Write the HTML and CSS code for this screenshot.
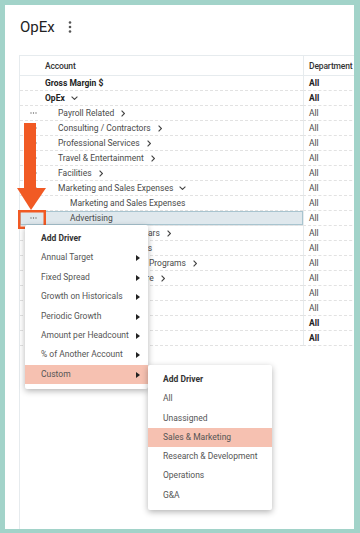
FILE: index.html
```html
<!DOCTYPE html>
<html lang="en">
<head>
  <meta charset="UTF-8" />
  <title>OpEx</title>
  <link rel="stylesheet" href="styles.css">
</head>
<body>
  <div class="panel">
    <div class="title-bar">
      <h1>OpEx</h1>
      <svg class="kebab" width="4" height="12" viewBox="0 0 4 12">
        <circle cx="2" cy="1.5" r="1.3" />
        <circle cx="2" cy="6" r="1.3" />
        <circle cx="2" cy="10.5" r="1.3" />
      </svg>
    </div>

    <div class="grid">
      <div class="row head">
        <div class="acct"><span class="name">Account</span></div>
        <div class="dept">Department</div>
      </div>

      <div class="row strong">
        <div class="acct"><span class="name">Gross Margin $</span></div>
        <div class="dept">All</div>
      </div>
      <div class="row strong">
        <div class="acct"><span class="name">OpEx</span><svg class="chev-down" width="7" height="4" viewBox="0 0 7 4"><path d="M0.6 0.6 L3.5 3.4 L6.4 0.6" /></svg></div>
        <div class="dept">All</div>
      </div>
      <div class="row">
        <div class="acct"><svg class="dots" width="7" height="2" viewBox="0 0 7 2"><circle cx="1" cy="1" r="0.65" /><circle cx="3.5" cy="1" r="0.65" /><circle cx="6" cy="1" r="0.65" /></svg><span class="name lvl1">Payroll Related</span><svg class="chev" width="4" height="7" viewBox="0 0 4 7"><path d="M0.6 0.6 L3.4 3.5 L0.6 6.4" /></svg></div>
        <div class="dept">All</div>
      </div>
      <div class="row">
        <div class="acct"><svg class="dots" width="7" height="2" viewBox="0 0 7 2"><circle cx="1" cy="1" r="0.65" /><circle cx="3.5" cy="1" r="0.65" /><circle cx="6" cy="1" r="0.65" /></svg><span class="name lvl1">Consulting / Contractors</span><svg class="chev" width="4" height="7" viewBox="0 0 4 7"><path d="M0.6 0.6 L3.4 3.5 L0.6 6.4" /></svg></div>
        <div class="dept">All</div>
      </div>
      <div class="row">
        <div class="acct"><svg class="dots" width="7" height="2" viewBox="0 0 7 2"><circle cx="1" cy="1" r="0.65" /><circle cx="3.5" cy="1" r="0.65" /><circle cx="6" cy="1" r="0.65" /></svg><span class="name lvl1">Professional Services</span><svg class="chev" width="4" height="7" viewBox="0 0 4 7"><path d="M0.6 0.6 L3.4 3.5 L0.6 6.4" /></svg></div>
        <div class="dept">All</div>
      </div>
      <div class="row">
        <div class="acct"><svg class="dots" width="7" height="2" viewBox="0 0 7 2"><circle cx="1" cy="1" r="0.65" /><circle cx="3.5" cy="1" r="0.65" /><circle cx="6" cy="1" r="0.65" /></svg><span class="name lvl1">Travel &amp; Entertainment</span><svg class="chev" width="4" height="7" viewBox="0 0 4 7"><path d="M0.6 0.6 L3.4 3.5 L0.6 6.4" /></svg></div>
        <div class="dept">All</div>
      </div>
      <div class="row">
        <div class="acct"><svg class="dots" width="7" height="2" viewBox="0 0 7 2"><circle cx="1" cy="1" r="0.65" /><circle cx="3.5" cy="1" r="0.65" /><circle cx="6" cy="1" r="0.65" /></svg><span class="name lvl1">Facilities</span><svg class="chev" width="4" height="7" viewBox="0 0 4 7"><path d="M0.6 0.6 L3.4 3.5 L0.6 6.4" /></svg></div>
        <div class="dept">All</div>
      </div>
      <div class="row">
        <div class="acct"><svg class="dots" width="7" height="2" viewBox="0 0 7 2"><circle cx="1" cy="1" r="0.65" /><circle cx="3.5" cy="1" r="0.65" /><circle cx="6" cy="1" r="0.65" /></svg><span class="name lvl1">Marketing and Sales Expenses</span><svg class="chev-down" width="7" height="4" viewBox="0 0 7 4"><path d="M0.6 0.6 L3.5 3.4 L6.4 0.6" /></svg></div>
        <div class="dept">All</div>
      </div>
      <div class="row">
        <div class="acct"><span class="name lvl2">Marketing and Sales Expenses</span></div>
        <div class="dept">All</div>
      </div>
      <div class="row selected">
        <div class="acct"><svg class="dots" width="7" height="2" viewBox="0 0 7 2"><circle cx="1" cy="1" r="0.65" /><circle cx="3.5" cy="1" r="0.65" /><circle cx="6" cy="1" r="0.65" /></svg><span class="name lvl2">Advertising</span></div>
        <div class="dept">All</div>
      </div>
      <div class="row">
        <div class="acct"><span class="name lvl1">Conferences and Seminars</span><svg class="chev" width="4" height="7" viewBox="0 0 4 7"><path d="M0.6 0.6 L3.4 3.5 L0.6 6.4" /></svg></div>
        <div class="dept">All</div>
      </div>
      <div class="row">
        <div class="acct"><span class="name lvl1">Marketing Print Products</span></div>
        <div class="dept">All</div>
      </div>
      <div class="row">
        <div class="acct"><span class="name lvl1">Demand Gen Marketing Programs</span><svg class="chev" width="4" height="7" viewBox="0 0 4 7"><path d="M0.6 0.6 L3.4 3.5 L0.6 6.4" /></svg></div>
        <div class="dept">All</div>
      </div>
      <div class="row">
        <div class="acct"><span class="name lvl1">Sales Tools and Software</span><svg class="chev" width="4" height="7" viewBox="0 0 4 7"><path d="M0.6 0.6 L3.4 3.5 L0.6 6.4" /></svg></div>
        <div class="dept">All</div>
      </div>
      <div class="row">
        <div class="acct"><span class="name lvl1">Insurance</span></div>
        <div class="dept">All</div>
      </div>
      <div class="row">
        <div class="acct"><span class="name lvl1">Other</span></div>
        <div class="dept">All</div>
      </div>
      <div class="row strong">
        <div class="acct"><span class="name">Total OpEx</span></div>
        <div class="dept">All</div>
      </div>
      <div class="row strong">
        <div class="acct"><span class="name">Net Income</span></div>
        <div class="dept">All</div>
      </div>
    </div>

    <!-- Flecha que señala el menú de la fila -->
    <svg class="pointer" width="30" height="111" viewBox="0 0 30 111">
      <rect x="7" y="0" width="12" height="67" />
      <polygon points="0,65 29,65 14,87" />
      <rect class="box" x="2.25" y="88.25" width="25.5" height="16.5" />
    </svg>

    <div class="menu main">
      <div class="item title">Add Driver</div>
      <div class="item">Annual Target<span class="tri"></span></div>
      <div class="item">Fixed Spread<span class="tri"></span></div>
      <div class="item">Growth on Historicals<span class="tri"></span></div>
      <div class="item">Periodic Growth<span class="tri"></span></div>
      <div class="item">Amount per Headcount<span class="tri"></span></div>
      <div class="item">% of Another Account<span class="tri"></span></div>
      <div class="item active">Custom<span class="tri"></span></div>
    </div>

    <div class="menu sub">
      <div class="item title">Add Driver</div>
      <div class="item">All</div>
      <div class="item">Unassigned</div>
      <div class="item active">Sales &amp; Marketing</div>
      <div class="item">Research &amp; Development</div>
      <div class="item">Operations</div>
      <div class="item">G&amp;A</div>
    </div>
  </div>
</body>
</html>
```

FILE: styles.css
```css
html, body {
  margin: 0;
}
body {
  background-color: #a2d3c9;
  padding: 5px 6px 4px 5px;
  height: 533px;
  box-sizing: border-box;
  font-family: Roboto, "Noto Sans", sans-serif;
}
.panel {
  position: relative;
  height: 524px;
  background-color: #fff;
  padding: 12px 0 0 14px;
  box-sizing: border-box;
  overflow: hidden;
  display: flex;
  flex-direction: column;
}

/* Titulo */
.title-bar {
  display: flex;
  align-items: center;
  height: 20px;
  padding-left: 1px;
}
.title-bar h1 {
  margin: 0;
  font-size: 15px;
  font-weight: 400;
  line-height: 20px;
  color: #222;
}
.kebab {
  margin-left: 13px;
  fill: #555;
}

/* Tabla */
.grid {
  flex: 1;
  margin-top: 18px;
  border-left: 1px solid #e6ebee;
  border-top: 1px solid #e6ebee;
  width: 380px;
  font-size: 8.5px;
  color: #4a4a4a;
}
.row {
  display: grid;
  grid-template-columns: 283px 80px;
  height: 15px;
}
.acct, .dept {
  display: flex;
  align-items: center;
  border-bottom: 1px dashed #e2e2e2;
  box-sizing: border-box;
}
.acct {
  padding-left: 25px;
  position: relative;
}
.dept {
  border-left: 1px solid #e6ebee;
  padding-left: 5px;
}
.row.head {
  height: 20px;
}
.row.head .acct, .row.head .dept {
  border-bottom: 1px solid #e6ebee;
  font-weight: 500;
  color: #333;
  letter-spacing: -0.15px;
}
.row.strong .acct, .row.strong .dept {
  font-weight: 700;
  color: #222;
}
.row.selected .acct {
  background-color: #dfe8ed;
  box-shadow: inset 0 0 0 1px #a8c4cf;
}
.dots {
  position: absolute;
  left: 10px;
  top: 6px;
  fill: #666;
}
.name.lvl1 {
  padding-left: 13px;
}
.name.lvl2 {
  padding-left: 25px;
}
.chev {
  margin-left: 7px;
  fill: none;
  stroke: #444;
  stroke-width: 1.1;
}
.chev-down {
  margin-left: 6px;
  fill: none;
  stroke: #444;
  stroke-width: 1.1;
}

/* Flecha */
.pointer {
  position: absolute;
  left: 12px;
  top: 118px;
  fill: #f15a24;
}
.pointer .box {
  fill: none;
  stroke: #f15a24;
  stroke-width: 2.5;
}

/* Menus */
.menu {
  position: absolute;
  background-color: #fff;
  box-shadow: 0 2px 6px rgba(0, 0, 0, 0.3);
  border-radius: 2px;
  font-size: 8.5px;
  color: #555;
}
.menu .item {
  position: relative;
  height: 19.4px;
  line-height: 19.4px;
  white-space: nowrap;
}
.menu .item.title {
  font-weight: 700;
  color: #333;
}
.menu .item.active {
  background-color: #f6c1b1;
}
.menu.main {
  left: 20px;
  top: 220px;
  width: 123px;
  padding: 4px 0 5px;
}
.menu.main .item {
  padding-left: 16px;
}
.menu.sub {
  left: 143px;
  top: 360px;
  width: 124px;
  padding: 5px 0;
}
.menu.sub .item {
  padding-left: 15px;
  height: 19.25px;
  line-height: 19.25px;
}
.tri {
  position: absolute;
  right: 8px;
  top: 7px;
  border-left: 4px solid #222;
  border-top: 3px solid transparent;
  border-bottom: 3px solid transparent;
}
```
